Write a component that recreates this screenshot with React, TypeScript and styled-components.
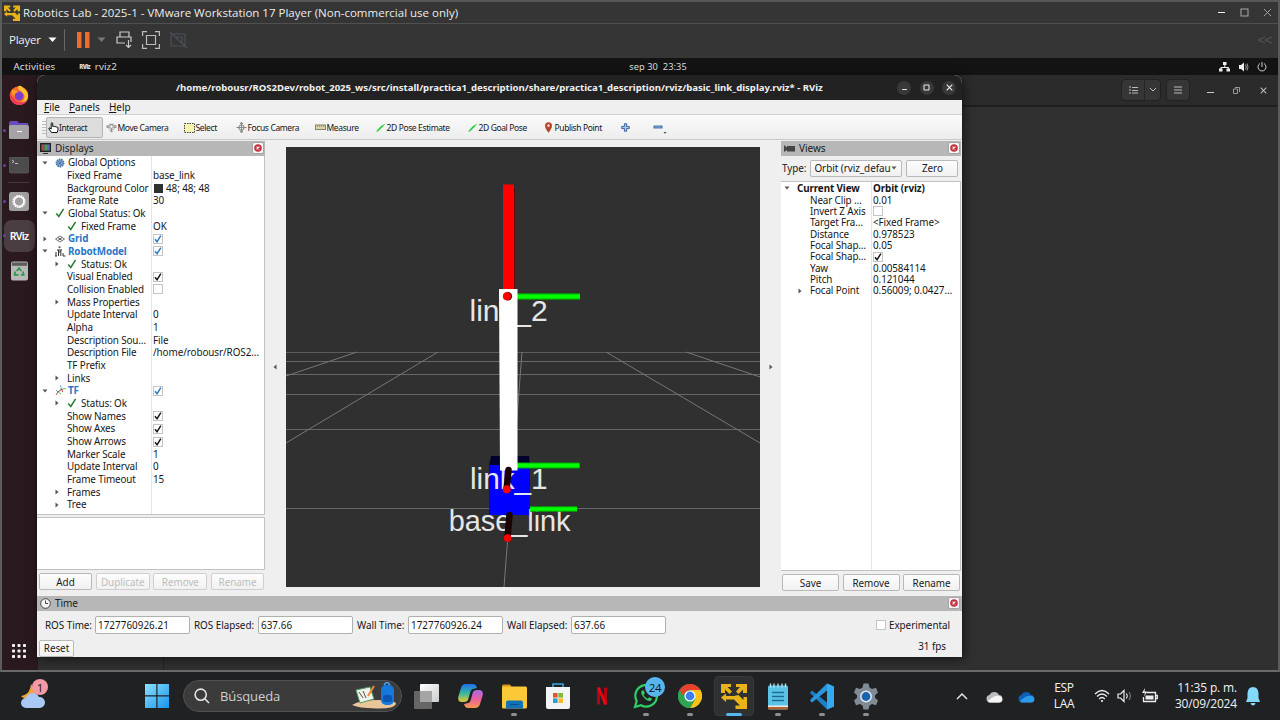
import React from 'react';
import styled, { createGlobalStyle, css } from 'styled-components';

const Global = createGlobalStyle`
  * { box-sizing: border-box; }
  body { margin: 0; width: 1280px; height: 720px; overflow: hidden; background: #202123; }
  svg { display: block; flex: none; }
`;
const ubuntu = css`font-family: 'Noto Sans', 'Open Sans', sans-serif;`;
const segoe = css`font-family: 'Open Sans', 'Noto Sans', sans-serif;`;

const Screen = styled.div`
  width: 1280px; height: 720px; display: flex; flex-direction: column; overflow: hidden; background: #202123;
`;
const VmWindow = styled.div`
  height: 672px; width: 1280px; display: flex; flex-direction: column; background: #353535;
  border-top: 2px solid #565656; border-left: 2px solid #5c5c5c; border-right: 2px solid #5c5c5c; border-bottom: 2px solid #6a6a6a;
`;
const VmTitle = styled.div`
  ${segoe} height: 22px; flex: none; display: flex; align-items: center; padding-left: 2px; gap: 2px;
  border-bottom: 1px solid #505050; color: #ececec; font-size: 11.5px;
`;
const VmTitleText = styled.span`flex: 1; white-space: nowrap; letter-spacing: 0.005px; padding-left: 1px;`;
const VmControls = styled.div`display: flex; gap: 14px; padding-right: 6px; align-items: center;`;
const VmToolbar = styled.div`
  ${segoe} height: 34px; flex: none; display: flex; align-items: center; padding: 0 0 2px 7px; color: #eee; font-size: 11.5px; letter-spacing: -0.25px;
`;
const PlayerLabel = styled.span`padding-bottom: 2px;`;
const Gap = styled.div<{ $w: number }>`width: ${p => p.$w}px; flex: none;`;
const Spacer = styled.div`flex: 1;`;
const VLine = styled.div`width: 1px; height: 22px; background: #666;`;

const TopBar = styled.div`
  ${ubuntu} height: 17px; flex: none; display: grid; grid-template-columns: 1fr auto 1fr; align-items: center;
  background: #131313; color: #dedede; font-size: 9.3px;
`;
const TopLeft = styled.div`display: flex; align-items: center; padding-left: 11.5px; font-size: 9.8px; letter-spacing: 0.1px;`;
const TopCenter = styled.div`padding-left: 36px; white-space: pre; letter-spacing: 0.05px;`;
const TopRight = styled.div`display: flex; justify-content: flex-end; align-items: center; gap: 8px; padding-right: 11px;`;
const RvizMark = styled.b`font-size: 6px; letter-spacing: -0.7px; margin: 0 5px 0 24px; font-weight: 900;`;

const Desktop = styled.div`flex: 1; display: flex; position: relative; min-height: 0;`;
const Dock = styled.div`
  width: 36px; flex: none; background: #2a1a20; display: flex; flex-direction: column; align-items: center; padding-top: 3px;
`;
const DockItem = styled.div<{ $h: number; $dot?: boolean }>`
  width: 100%; height: ${p => p.$h}px; flex: none; display: flex; align-items: center; justify-content: center; position: relative; padding-right: 2px;
  ${p => p.$dot && css`&::before { content: ''; position: absolute; left: 1px; width: 3px; height: 3px; border-radius: 50%; background: #6247a0; }`}
`;
const ActiveTile = styled.div`
  ${ubuntu} width: 31px; height: 32px; border-radius: 8px; background: #4b3e43; color: #fff; font-weight: 600;
  display: flex; align-items: center; justify-content: center; font-size: 10.5px; letter-spacing: -0.7px;
`;
const DockRule = styled.div`width: 22px; height: 1px; background: #46383e; margin-right: 2px;`;

const BackWindow = styled.div`flex: 1; background: #303030; display: flex; flex-direction: column;`;
const BackHeader = styled.div`
  height: 32px; flex: none; background: #2b2b2b; border-bottom: 2px solid #1f1f1f; display: flex; justify-content: flex-end; align-items: center; padding-right: 8px;
`;
const BackBody = styled.div`flex: 1; display: flex;`;
const BackSide = styled.div`width: 126px; border-right: 1px solid #242424;`;
const DarkGroup = styled.div<{ $w: number }>`
  height: 22px; width: ${p => p.$w}px; border: 1px solid #222; border-radius: 4px; background: #363636; display: flex; align-items: center;
  & > * { flex: 1; height: 100%; display: flex; align-items: center; justify-content: center; }
  & > * + * { border-left: 1px solid #262626; flex: 0 0 16px; }
`;

const Rviz = styled.div`
  ${ubuntu} position: absolute; left: 35px; top: 0; width: 925px; height: 582px; background: #efefef; color: #161616;
  display: flex; flex-direction: column; border-radius: 8px 8px 0 0; overflow: hidden; font-size: 9.9px; letter-spacing: -0.04px;
`;
const RvizShadow = styled.div`
  position: absolute; left: 35px; top: 0; width: 925px; height: 582px; box-shadow: 1px 2px 12px rgba(0,0,0,.6); border-radius: 8px 8px 0 0;
`;
const RvizTitle = styled.div`
  height: 25px; flex: none; background: #222; color: #f0f0f0; font-weight: 700; font-size: 9.6px; display: flex; align-items: center;
`;
const RvizTitleText = styled.div`padding-left: 139px; width: 851px; white-space: nowrap; letter-spacing: -0.018px;`;
const RoundBtns = styled.div`display: flex; gap: 8.5px;`;
const Round = styled.div`width: 14px; height: 14px; border-radius: 50%; background: #383838; display: flex; align-items: center; justify-content: center;`;
const MenuBar = styled.div`
  height: 15px; flex: none; border-bottom: 1px solid #d0d0d0; display: flex; align-items: center; gap: 9px; padding-left: 7px; font-size: 10px; letter-spacing: 0;
  & u { text-underline-offset: 1px; }
`;
const ToolBar = styled.div`
  height: 25px; flex: none; display: flex; align-items: center; background: linear-gradient(#fafafa, #ededed); border-bottom: 1px solid #c9c9c9; font-size: 8.5px; letter-spacing: -0.38px; padding: 1px 0 0 5px;
`;
const Grip = styled.div`width: 4px; height: 16px; background: radial-gradient(circle, #bbb 0.7px, transparent 1px) 0 0/2px 3px;`;
const Tool = styled.div<{ $w: number; $on?: boolean; $gap?: number }>`
  width: ${p => p.$w}px; height: 21px; flex: none; display: flex; align-items: center; white-space: nowrap; gap: ${p => p.$gap ?? 1}px; padding-left: ${p => (p.$on ? 1 : 1.5)}px;
  border: 1px solid ${p => (p.$on ? '#b4b4b4' : 'transparent')}; border-radius: 2px; background: ${p => (p.$on ? '#dcdcdc' : 'none')};
`;
const Content = styled.div`height: 456px; flex: none; display: flex; padding-top: 1px;`;
const PanelHead = styled.div<{ $r?: number }>`
  height: 15px; flex: none; background: #b7b7b7; display: flex; align-items: center; padding: 0 ${p => p.$r ?? 1}px 1px 3px; gap: 4px; font-size: 10px; color: #222;
  & > span { flex: 1; }
`;
const CloseBox = styled.div`
  width: 12px; height: 12px; background: #f6f6f6; border: 1px solid #a5a5a5; border-radius: 2px; display: flex; align-items: center; justify-content: center;
`;
const Displays = styled.div`width: 228px; flex: none; display: flex; flex-direction: column;`;
const Tree = styled.div<{ $h: number; $split: number; $up?: boolean }>`
  height: ${p => p.$h}px; flex: none; padding-top: 0.4px; border: 1px solid #c2c2c2; border-left: 0; ${p => p.$up && css`border-top: 0;`}
  background: linear-gradient(90deg, #fff ${p => p.$split}px, #e4e4e4 ${p => p.$split}px, #e4e4e4 ${p => p.$split + 1}px, #fff ${p => p.$split + 1}px);
`;
const Row = styled.div<{ $h: number; $bold?: boolean; $blue?: boolean; $split: number }>`
  height: ${p => p.$h}px; display: grid; grid-template-columns: ${p => p.$split}px 1fr; align-items: center; white-space: nowrap;
  & > :first-child { font-weight: ${p => (p.$bold ? 700 : 400)}; color: ${p => (p.$blue ? '#2a76c6' : 'inherit')}; }
`;
const NameCell = styled.div<{ $pad: number }>`display: flex; align-items: center; padding-left: ${p => p.$pad}px; min-width: 0; line-height: 11px; height: 11.3px; letter-spacing: -0.13px;`;
const Arrow = styled.div`width: 13px; flex: none;`;
const IconCell = styled.div<{ $w: number }>`width: ${p => p.$w}px; flex: none;`;
const ValueCell = styled.div<{ $bold?: boolean }>`padding-left: 2px; display: flex; align-items: center; gap: 3px; line-height: 11px; height: 11.3px; letter-spacing: -0.08px; font-weight: ${p => (p.$bold ? 700 : 400)};`;
const Swatch = styled.div`width: 9px; height: 9px; background: #303030; margin-left: 1px;`;
const Box = styled.div`width: 10px; height: 10px; background: #fff; border: 1px solid #c4c4c4;`;
const Splitter = styled.div<{ $h: number }>`height: ${p => p.$h}px; flex: none;`;
const Describe = styled.div`height: 53px; flex: none; background: #fff; border: 1px solid #c2c2c2; border-left: 0;`;
const Buttons = styled.div<{ $gap: number; $l?: number }>`display: flex; gap: ${p => p.$gap}px; padding: 3px 1px 0 ${p => p.$l ?? 1}px;`;
const Btn = styled.div<{ $w: number; $off?: boolean }>`
  width: ${p => p.$w}px; height: 17px; flex: none; display: flex; align-items: center; justify-content: center; border: 1px solid ${p => (p.$off ? '#cfcfcf' : '#b9b9b9')};
  border-radius: 2px; background: linear-gradient(#fdfdfd, #f1f1f1); color: ${p => (p.$off ? '#bdbdbd' : '#1a1a1a')};
`;
const Collapse = styled.div<{ $l: number }>`width: 21px; flex: none; display: flex; align-items: center; padding: 0 0 4px ${p => p.$l}px;`;
const Viewport = styled.div`width: 474px; height: 440px; margin-top: 6px; flex: none; background: #303030;`;
const Views = styled.div`width: 180px; flex: none; display: flex; flex-direction: column;`;
const TypeRow = styled.div`height: 25px; flex: none; display: flex; align-items: center; padding: 0 0 1px 1px;`;
const Combo = styled.div`
  width: 92px; height: 17px; margin: 0 4px 0 4px; border: 1px solid #b9b9b9; border-radius: 2px; background: linear-gradient(#fdfdfd, #f0f0f0); display: flex; align-items: center; padding: 0 4px 0 3px;
  & > span { flex: 1; overflow: hidden; white-space: nowrap; }
`;
const TimeRow = styled.div`height: 28px; flex: none; display: flex; align-items: center; padding-left: 8px;`;
const Field = styled.div`width: 95px; height: 18px; border: 1px solid #b0b0b0; border-radius: 2px; background: #fff; display: flex; align-items: center; padding-left: 2px; font-size: 9.9px; letter-spacing: 0.03px;`;
const LabelBox = styled.div<{ $w: number; $l?: number }>`width: ${p => p.$w}px; padding-left: ${p => p.$l ?? 4}px; white-space: nowrap; flex: none;`;
const FootRow = styled.div`flex: 1; display: flex; align-items: center; padding: 0 16px 1px 2px; justify-content: space-between;
  & > span { padding-bottom: 4px; }
`;

const Taskbar = styled.div`
  ${segoe} height: 48px; flex: none; display: flex; align-items: center; color: #f2f2f2; background: #202123;
`;
const Slot = styled.div<{ $on?: boolean }>`
  width: 44px; height: 48px; flex: none; display: flex; align-items: center; justify-content: center; position: relative;
  ${p => p.$on && css`&::before { content: ''; position: absolute; inset: 4px 2px; border-radius: 4px; background: #2f3032; border: 1px solid #37383a; }`}
  & > svg { position: relative; }
`;
const Pip = styled.i<{ $on?: boolean }>`
  position: absolute; bottom: 4px; left: 50%; height: 3px; border-radius: 2px; width: ${p => (p.$on ? 16 : 6)}px; margin-left: ${p => (p.$on ? -8 : -3)}px; background: ${p => (p.$on ? '#56b7f1' : '#8f8f8f')};
`;
const Badge = styled.span<{ $c: string; $s: number; $t: number }>`
  position: absolute; left: 21px; top: ${p => p.$t}px; width: ${p => p.$s}px; height: ${p => p.$s}px; border-radius: 50%; background: ${p => p.$c}; color: #111; font-size: 11.5px; display: flex; align-items: center; justify-content: center; letter-spacing: -0.3px;
`;
const Search = styled.div`
  width: 219px; height: 32px; border-radius: 16px; background: #3b3b3c; border: 1px solid #515152; display: flex; align-items: center; padding: 0 4px 0 10px; gap: 10px; font-size: 13px; color: #cfcfcf;
  & > span { flex: 1; letter-spacing: -0.1px; }
`;
const Lang = styled.div`width: 30px; text-align: center; font-size: 12px; line-height: 16px; letter-spacing: -0.3px;`;
const Clock = styled.div`width: 73px; text-align: right; font-size: 12px; line-height: 16px; white-space: nowrap; letter-spacing: -0.16px;`;

const VmLogo = ({ s, c = '#e9b417' }: { s: number; c?: string }) => (
  <svg width={s} height={s} viewBox="0 0 26 26" fill={c}>
    <path d="M0 1h10v3H6.500l4.500 4.500-2.500 2.500L4 6.500V10H0zM15 1h11v9h-4V6.500l-4.500 4.500L15 8.500 19 4h-4zM0 14.500l5-4v2.500h9v3.500H5V19zM13 13l4.500-1 5 5V14H26v12H14.500v-3.500H19l-6-6z" />
  </svg>
);
const Tri = ({ open, c = '#555' }: { open?: boolean; c?: string }) => (
  <svg width="6" height="6" viewBox="0 0 6 6" fill={c}>{open ? <path d="M.5 1.500h5L3 4.500z" /> : <path d="M1.500.5v5L4.500 3z" />}</svg>
);
const Check = ({ c = '#161616', s = 10, w = 1.6 }: { c?: string; s?: number; w?: number }) => (
  <svg width={s} height={s} viewBox="0 0 10 10" fill="none" stroke={c} strokeWidth={w}><path d="M1.200 5.400l2.600 3 4.800-7.600" /></svg>
);
const CheckBox = ({ on, blue }: { on?: boolean; blue?: boolean }) => (
  <Box>{on && <Check s={8} w={1.8} c={blue ? '#2a76c6' : '#161616'} />}</Box>
);
const Close = () => (
  <CloseBox><svg width="8" height="8" viewBox="0 0 8 8"><circle cx="4" cy="4" r="3.800" fill="#c8303f" /><path d="M2.600 2.600l2.800 2.800M5.400 2.600L2.600 5.400" stroke="#fff" strokeWidth="1.100" /></svg></CloseBox>
);
const Xmark = ({ s, c, w = 1 }: { s: number; c: string; w?: number }) => (
  <svg width={s} height={s} viewBox="0 0 10 10" stroke={c} strokeWidth={w}><path d="M1 1l8 8M9 1l-8 8" /></svg>
);

const GearIcon = () => (
  <svg width="10" height="10" viewBox="0 0 10 10"><circle cx="5" cy="5" r="3.600" fill="#8fb0d8" stroke="#3f6ea8" strokeWidth="1.600" strokeDasharray="1.500 .7" /><path d="M5 2v6M2 5h6M3 3l4 4M7 3L3 7" stroke="#3f6ea8" strokeWidth=".6" /></svg>
);
const GridIcon = () => (
  <svg width="10" height="8" viewBox="0 0 10 8" fill="none" stroke="#666" strokeWidth=".9"><path d="M.5 4L5 1l4.500 3L5 7zM2.700 2.500l4.600 3M7.300 2.500l-4.600 3" /><path d="M4 4h2" strokeWidth="2" /></svg>
);
const RobotIcon = () => (
  <svg width="11" height="11" viewBox="0 0 11 11" fill="none" stroke="#333" strokeWidth="1"><circle cx="4.500" cy="1.300" r="1" fill="#555" stroke="none" /><path d="M1 10V6M3.500 4v6M5.800 4v6M2 4h5M8 7v3h2.500M0 10h2M4 6h1.500" /></svg>
);
const TfIcon = () => (
  <svg width="12" height="11" viewBox="0 0 12 11" fill="none" strokeWidth="1"><path d="M6.500 5L5.500 0" stroke="#7aa6d8" /><path d="M3 7L1 10" stroke="#c44" /><path d="M3 7l4-3" stroke="#444" /><path d="M7 4l4-.5" stroke="#6c6" /><path d="M3 7l3 2" stroke="#6c6" /><path d="M7 4l.5 3" stroke="#c44" /><path d="M3 7L1 5" stroke="#88a" /></svg>
);
const icons: Record<string, React.ReactNode> = {
  gear: <GearIcon />, grid: <GridIcon />, robot: <RobotIcon />, tf: <TfIcon />, ok: <Check c="#2a7a33" w={1.5} />,
};

type Item = { n: string; v?: React.ReactNode; lv: number; a?: 'o' | 'c'; i?: string; blue?: boolean; chk?: 0 | 1 };
const displayRows: Item[] = [
  { n: 'Global Options', lv: 0, a: 'o', i: 'gear' },
  { n: 'Fixed Frame', v: 'base_link', lv: 1 },
  { n: 'Background Color', v: <><Swatch />48; 48; 48</>, lv: 1 },
  { n: 'Frame Rate', v: '30', lv: 1 },
  { n: 'Global Status: Ok', lv: 0, a: 'o', i: 'ok' },
  { n: 'Fixed Frame', v: 'OK', lv: 1, i: 'ok' },
  { n: 'Grid', lv: 0, a: 'c', i: 'grid', blue: true, chk: 1 },
  { n: 'RobotModel', lv: 0, a: 'o', i: 'robot', blue: true, chk: 1 },
  { n: 'Status: Ok', lv: 1, a: 'c', i: 'ok' },
  { n: 'Visual Enabled', lv: 1, chk: 1 },
  { n: 'Collision Enabled', lv: 1, chk: 0 },
  { n: 'Mass Properties', lv: 1, a: 'c' },
  { n: 'Update Interval', v: '0', lv: 1 },
  { n: 'Alpha', v: '1', lv: 1 },
  { n: 'Description Sou…', v: 'File', lv: 1 },
  { n: 'Description File', v: '/home/robousr/ROS2…', lv: 1 },
  { n: 'TF Prefix', lv: 1 },
  { n: 'Links', lv: 1, a: 'c' },
  { n: 'TF', lv: 0, a: 'o', i: 'tf', blue: true, chk: 1 },
  { n: 'Status: Ok', lv: 1, a: 'c', i: 'ok' },
  { n: 'Show Names', lv: 1, chk: 1 },
  { n: 'Show Axes', lv: 1, chk: 1 },
  { n: 'Show Arrows', lv: 1, chk: 1 },
  { n: 'Marker Scale', v: '1', lv: 1 },
  { n: 'Update Interval', v: '0', lv: 1 },
  { n: 'Frame Timeout', v: '15', lv: 1 },
  { n: 'Frames', lv: 1, a: 'c' },
  { n: 'Tree', lv: 1, a: 'c' },
];
const viewRows: Item[] = [
  { n: 'Near Clip …', v: '0.01', lv: 1 },
  { n: 'Invert Z Axis', lv: 1, chk: 0 },
  { n: 'Target Fra…', v: '<Fixed Frame>', lv: 1 },
  { n: 'Distance', v: '0.978523', lv: 1 },
  { n: 'Focal Shap…', v: '0.05', lv: 1 },
  { n: 'Focal Shap…', lv: 1, chk: 1 },
  { n: 'Yaw', v: '0.00584114', lv: 1 },
  { n: 'Pitch', v: '0.121044', lv: 1 },
  { n: 'Focal Point', v: '0.56009; 0.0427…', lv: 1, a: 'c' },
];

const DisplayRow = ({ r }: { r: Item }) => (
  <Row $h={12.68} $split={114} $bold={r.blue} $blue={r.blue}>
    <NameCell $pad={r.lv ? 17 : 4.5}>
      <Arrow>{r.a && <Tri open={r.a === 'o'} />}</Arrow>
      {r.lv === 0 ? <IconCell $w={13.5}>{icons[r.i!]}</IconCell> : r.i ? <IconCell $w={14}>{icons[r.i]}</IconCell> : null}
      {r.n}
    </NameCell>
    <ValueCell>{r.chk !== undefined ? <CheckBox on={!!r.chk} blue={r.blue} /> : r.v}</ValueCell>
  </Row>
);

const Scene = () => (
  <svg width="474" height="440" viewBox="286 147 474 440">
    <g stroke="#777" strokeWidth="1" fill="none">
      <path d="M286 352.500H760" stroke="#5c5c5c" />
      <path d="M286 361.500H760M286 374.500H760M286 394.500H760M286 429.500H760M286 508.500H760" stroke="#666" />
      <path d="M438 352L286 443M357 352L286 376M606 352L760 443M686 352L760 377M522 352L504 587" />
    </g>
    <path d="M491 456h38l1 10h-41z" fill="#00002c" />
    <rect x="489" y="465" width="41" height="50" fill="#00f" />
    <g fontFamily="Liberation Sans, Arial, sans-serif" fill="#e6e6e6">
      <text x="469.500" y="320.500" fontSize="30">link_2</text>
      <text x="470" y="488.500" fontSize="29.800">link_1</text>
      <text x="448.800" y="531" fontSize="28.900">base_link</text>
    </g>
    <rect x="503" y="184.500" width="11" height="105" fill="#f00" />
    <path d="M514.500 188v101" stroke="#600" />
    <path d="M516 296.500H580" stroke="#0a0" strokeWidth="6.500" /><path d="M516 296.500H580" stroke="#0f0" strokeWidth="4" />
    <path d="M516 465.500H579.500" stroke="#0a0" strokeWidth="6" /><path d="M516 465.500H579.500" stroke="#0f0" strokeWidth="4" />
    <path d="M530 509H577" stroke="#0a0" strokeWidth="5.500" /><path d="M530 509H577" stroke="#0f0" strokeWidth="3.500" />
    <path d="M499 289h18.500v181.500H500z" fill="#fff" />
    <circle cx="507.800" cy="296.300" r="4.300" fill="#400" /><circle cx="506.900" cy="296.300" r="4" fill="#f00" />
    <path d="M508.500 470L506.800 487" stroke="#1c0000" strokeWidth="6.500" strokeLinecap="round" />
    <circle cx="506.700" cy="489.300" r="4" fill="#f00" />
    <path d="M509.500 515L507.700 535" stroke="#1c0000" strokeWidth="6.500" strokeLinecap="round" />
    <circle cx="507.600" cy="538" r="3.800" fill="#f00" />
  </svg>
);

const Lance = () => <svg width="11" height="10" viewBox="0 0 11 10"><path d="M1 8.500L6 3l4.500-2.500L8 3.500 3 8.500z" fill="#1fd03c" /></svg>;
const Target = () => (
  <svg width="11" height="11" viewBox="0 0 12 12" fill="none" stroke="#8a8a8a" strokeWidth="1.100"><circle cx="6" cy="6" r="2.800" /><path d="M6 .5v11M.5 6h11M4.500 2L6 .5 7.500 2M4.500 10L6 11.500 7.500 10" /></svg>
);
const Pan = () => (
  <svg width="11" height="11" viewBox="0 0 12 12" fill="none" stroke="#8a8a8a" strokeWidth="1"><circle cx="6" cy="5" r="2" /><path d="M3.500 2.500h5M1 4h2v2H1zM9 4h2v2H9zM6 7v4M4.500 9.500L6 11l1.500-1.500M3 7l2 2M9 7L7 9" /></svg>
);

export default function App() {
  return (
    <>
      <Global />
      <Screen>
        <VmWindow>
          <VmTitle>
            <VmLogo s={16} />
            <VmTitleText>Robotics Lab - 2025-1 - VMware Workstation 17 Player (Non-commercial use only)</VmTitleText>
            <VmControls>
              <svg width="9" height="9" viewBox="0 0 9 9"><path d="M1 4.500h7" stroke="#eee" /></svg>
              <svg width="9" height="9" viewBox="0 0 9 9"><rect x="1" y="1" width="7" height="7" fill="none" stroke="#aaa" /></svg>
              <Xmark s={9} c="#aaa" />
            </VmControls>
          </VmTitle>
          <VmToolbar>
            <PlayerLabel>Player</PlayerLabel><Gap $w={7} />
            <svg width="9" height="6" viewBox="0 0 9 6" fill="#fff"><path d="M.5.5h8l-4 4.500z" /></svg>
            <Gap $w={7} /><VLine /><Gap $w={12} />
            <svg width="13" height="16" viewBox="0 0 13 16" fill="#ee6c2c"><path d="M0 0h4.500v16H0zM8 0h4.500v16H8z" /></svg>
            <Gap $w={7} />
            <svg width="9" height="6" viewBox="0 0 9 6" fill="#777"><path d="M.5.5h8l-4 4.500z" /></svg>
            <Gap $w={10} />
            <svg width="17" height="18" viewBox="0 0 17 18" fill="none" stroke="#ccc" strokeWidth="1.200"><path d="M4 6V1h9v5M9 12H1V6h14v5M12.500 9v7M10 14l2.500 2.500L15 14" /></svg>
            <Gap $w={9} />
            <svg width="18" height="18" viewBox="0 0 18 18" fill="none" stroke="#bbb" strokeWidth="1.200"><path d="M.6 5V.6H5M13 .6h4.400V5M17.400 13v4.400H13M5 17.400H.6V13M4.500 4.500h9v9h-9z" /></svg>
            <Gap $w={9} />
            <svg width="19" height="18" viewBox="0 0 19 18" fill="none" stroke="#4b5157" strokeWidth="1.100"><path d="M2 3h14v12H2zM7 6h6v6M1 1l17 16" /></svg>
            <Spacer />
            <svg width="16" height="8" viewBox="0 0 16 8" fill="none" stroke="#4f5a60"><path d="M8 1L1 4l7 3M15 1L8 4l7 3" /></svg>
            <Gap $w={5} />
          </VmToolbar>
          <TopBar>
            <TopLeft>Activities<RvizMark>RViz</RvizMark>rviz2</TopLeft>
            <TopCenter>sep 30  23:35</TopCenter>
            <TopRight>
              <svg width="11" height="10" viewBox="0 0 11 10" fill="#eee"><path d="M4 0h3.500v3H4zM0 6.500h3.500v3H0zM7.500 6.500H11v3H7.500zM5.300 3h1v2h3.500v2h-1V6H2.500v1h-1V5h3.800z" /></svg>
              <svg width="11" height="10" viewBox="0 0 11 10"><path d="M1 3h2l3-2.500v9L3 7H1z" fill="#eee" /><path d="M7.500 2.500q1.500 2.500 0 5M9 1.500q2 3.500 0 7" stroke="#999" fill="none" /></svg>
              <svg width="10" height="10" viewBox="0 0 10 10" fill="none" stroke="#ccc"><path d="M3 1.500a4 4 0 1 0 4 0M5 0v5" /></svg>
            </TopRight>
          </TopBar>
          <Desktop>
            <Dock>
              <DockItem $h={34}>
                <svg width="20" height="20" viewBox="0 0 20 20"><circle cx="10" cy="10.500" r="9.300" fill="#ff6a2b" /><path d="M9 1.500c3-2 4 1 7 3s4 7 2 11-8 5-11 3c6 0 10-5 8-9s-6-3-6-8z" fill="#ffc531" /><path d="M1 11c0 5 4 9 9 9 4 0 7-2 8-5-3 3-9 3-12 0S1 7 1 11z" fill="#f03a5c" /><circle cx="10" cy="11" r="4.400" fill="#7a3fd0" /><path d="M3 4c1 2 5 0 6 4-3-1-4 2-3 4-3-2-4-5-3-8z" fill="#ff9a1f" /></svg>
              </DockItem>
              <DockItem $h={36} $dot>
                <svg width="20" height="18" viewBox="0 0 20 18"><path d="M0 2Q0 0 2 0h6l2 2h9v6H0z" fill="#6a4bbd" /><rect y="4" width="20" height="14" rx="1.500" fill="#a6a3a6" /><path d="M8 10.500h5" stroke="#fff" /></svg>
              </DockItem>
              <DockItem $h={34} $dot>
                <svg width="20" height="17" viewBox="0 0 20 17"><rect width="20" height="16" rx="2" fill="#4c4c4c" stroke="#666" strokeWidth=".6" /><path d="M3 3l2 1.500L3 6M6 6.500h3" stroke="#ddd" fill="none" strokeWidth=".8" /></svg>
              </DockItem>
              <DockRule />
              <DockItem $h={36} $dot>
                <svg width="20" height="19" viewBox="0 0 20 19"><rect width="20" height="19" rx="2.500" fill="#a09e9f" /><circle cx="10" cy="9.500" r="5.400" fill="none" stroke="#fff" strokeWidth="2.400" strokeDasharray="1.600 .6" /><circle cx="10" cy="9.500" r="4.800" fill="none" stroke="#fff" strokeWidth="1.200" /></svg>
              </DockItem>
              <DockItem $h={33} $dot><ActiveTile>RViz</ActiveTile></DockItem>
              <DockItem $h={37}>
                <svg width="17" height="20" viewBox="0 0 18 20"><rect width="18" height="20" rx="2" fill="#b9b9b9" /><rect x="1" y="1" width="16" height="3.500" fill="#5d5d5d" /><path d="M6 10l2.500-3 2.500 3M12.500 10.500l1 3.500h-3M4.500 10.500L3.800 14H8" fill="none" stroke="#2a9a4a" strokeWidth="1.800" /></svg>
              </DockItem>
              <Spacer />
              <DockItem $h={39}>
                <svg width="14" height="14" viewBox="0 0 14 14" fill="#f3f3f3">{[0, 5.5, 11].map(y => [0, 5.5, 11].map(x => <rect key={x + '-' + y} x={x} y={y} width="3" height="3" rx=".8" />))}</svg>
              </DockItem>
            </Dock>
            <BackWindow>
              <BackHeader>
                <DarkGroup $w={40}>
                  <div><svg width="9" height="8" viewBox="0 0 9 8" stroke="#bbb"><path d="M0 1h2M3 1.500h6M0 4h2M3 4.500h6M0 7h2M3 7h6" /></svg></div>
                  <div><svg width="8" height="6" viewBox="0 0 8 6" fill="none" stroke="#bbb"><path d="M1 1l3 3 3-3" /></svg></div>
                </DarkGroup>
                <Gap $w={5} />
                <DarkGroup $w={24}><div><svg width="8" height="8" viewBox="0 0 8 8" stroke="#bbb"><path d="M0 1h8M0 4h8M0 7h8" /></svg></div></DarkGroup>
                <Gap $w={17} />
                <svg width="7" height="7" viewBox="0 0 7 7"><path d="M0 5.500h7" stroke="#ccc" /></svg>
                <Gap $w={19} />
                <svg width="7" height="7" viewBox="0 0 7 7" fill="none" stroke="#999"><path d="M.5 2h4v4.500h-4zM2 .5h4.500V5" /></svg>
                <Gap $w={20} />
                <Xmark s={7} c="#bbb" w={1.5} />
                <Gap $w={3} />
              </BackHeader>
              <BackBody><BackSide /></BackBody>
            </BackWindow>
            <RvizShadow />
            <Rviz>
              <RvizTitle>
                <RvizTitleText>/home/robousr/ROS2Dev/robot_2025_ws/src/install/practica1_description/share/practica1_description/rviz/basic_link_display.rviz* - RViz</RvizTitleText>
                <Gap $w={9} />
                <RoundBtns>
                  <Round><svg width="7" height="7" viewBox="0 0 7 7"><path d="M1 5.500h5" stroke="#ddd" /></svg></Round>
                  <Round><svg width="7" height="7" viewBox="0 0 7 7"><path d="M1 1h5v5H1z" fill="none" stroke="#eee" /></svg></Round>
                  <Round><Xmark s={7} c="#eee" w={1.6} /></Round>
                </RoundBtns>
              </RvizTitle>
              <MenuBar><span><u>F</u>ile</span><span><u>P</u>anels</span><span><u>H</u>elp</span></MenuBar>
              <ToolBar>
                <Grip />
                <Tool $w={57} $on $gap={-1}>
                  <svg width="11" height="11" viewBox="0 0 11 11" fill="#fff" stroke="#111" strokeWidth="1"><path d="M3.500 10.500L1 7q-.5-1.500 1-1l1.200 1V1.200q.8-1 1.500 0V4.500q1.500-.6 2 .2 1.500-.4 1.800.4 1.500-.2 1.500.8V8l-.8 2.500z" /></svg>Interact
                </Tool>
                <Tool $w={78}><Pan />Move Camera</Tool>
                <Tool $w={52}><svg width="11" height="10" viewBox="0 0 11 10"><rect x=".5" y=".5" width="10" height="9" fill="#f7f3b0" stroke="#444" strokeDasharray="1.500 1" /></svg>Select</Tool>
                <Tool $w={79}><Target />Focus Camera</Tool>
                <Tool $w={60}><svg width="11" height="7" viewBox="0 0 11 7"><rect x=".5" y="1" width="10" height="4.500" fill="#d8d2ae" stroke="#8a8564" /><path d="M2.500 1v2M4.500 1v2M6.500 1v2M8.500 1v2" stroke="#8a8564" strokeWidth=".7" /></svg>Measure</Tool>
                <Tool $w={92}><Lance />2D Pose Estimate</Tool>
                <Tool $w={77}><Lance />2D Goal Pose</Tool>
                <Tool $w={77} $gap={2}><svg width="9" height="11" viewBox="0 0 9 11"><path d="M4.500 10.800Q1 6.500 1 3.800a3.500 3.500 0 0 1 7 0Q8 6.500 4.500 10.800z" fill="#b8452b" /><circle cx="4.500" cy="3.600" r="1.300" fill="#f3d6cf" /></svg>Publish Point</Tool>
                <Tool $w={32}><svg width="9" height="9" viewBox="0 0 10 10"><path d="M3.800.8h2.400v3h3v2.400h-3v3H3.800v-3h-3V3.800h3z" fill="#a9c6ea" stroke="#2d5c9e" /></svg></Tool>
                <Tool $w={24}><svg width="14" height="13" viewBox="0 0 14 13"><rect x="1" y="5" width="8" height="2" fill="#8bb0de" stroke="#2d5c9e" strokeWidth=".8" /><path d="M10.500 11h3L12 12.800z" fill="#444" /></svg></Tool>
              </ToolBar>
              <Content>
                <Displays>
                  <PanelHead>
                    <svg width="11" height="11" viewBox="0 0 11 11"><rect x=".5" y=".5" width="10" height="8" fill="#333" stroke="#222" /><path d="M1.500 1.500h3v6h-3z" fill="#a54b58" /><path d="M4.500 1.500H7v6H4.500z" fill="#4c9a63" /><path d="M7 1.500h2.500v6H7z" fill="#5b6fb5" /><path d="M3 10.500h5" stroke="#333" /></svg>
                    <span>Displays</span><Close />
                  </PanelHead>
                  <Tree $h={359} $split={114} $up>
                    {displayRows.map((r, i) => <DisplayRow key={i} r={r} />)}
                  </Tree>
                  <Splitter $h={2} />
                  <Describe />
                  <Buttons $gap={3.7} $l={2}>
                    <Btn $w={53}>Add</Btn><Btn $w={54} $off>Duplicate</Btn><Btn $w={54} $off>Remove</Btn><Btn $w={53} $off>Rename</Btn>
                  </Buttons>
                </Displays>
                <Collapse $l={7}><svg width="6" height="6" viewBox="0 0 6 6" fill="#555"><path d="M4.500.5v5L1.500 3z" /></svg></Collapse>
                <Viewport><Scene /></Viewport>
                <Collapse $l={8}><Tri /></Collapse>
                <Views>
                  <PanelHead>
                    <svg width="11" height="9" viewBox="0 0 11 9" fill="#444"><path d="M0 1l3 2.500V2h8v5.500H3V6L0 8z" /></svg>
                    <span>Views</span><Close />
                  </PanelHead>
                  <TypeRow>Type:<Combo><span>Orbit (rviz_default)</span><Tri open /></Combo><Btn $w={52}>Zero</Btn></TypeRow>
                  <Tree $h={390} $split={90}>
                    <Row $h={12} $split={90} $bold>
                      <NameCell $pad={3}><Arrow>{<Tri open />}</Arrow>Current View</NameCell>
                      <ValueCell $bold>Orbit (rviz)</ValueCell>
                    </Row>
                    {viewRows.map((r, i) => (
                      <Row key={i} $h={11.35} $split={90}>
                        <NameCell $pad={16}><Arrow>{r.a && <Tri />}</Arrow>{r.n}</NameCell>
                        <ValueCell>{r.chk !== undefined ? <CheckBox on={!!r.chk} /> : r.v}</ValueCell>
                      </Row>
                    ))}
                  </Tree>
                  <Buttons $gap={3.5}><Btn $w={57}>Save</Btn><Btn $w={57}>Remove</Btn><Btn $w={57}>Rename</Btn></Buttons>
                </Views>
              </Content>
              <PanelHead $r={2}>
                <svg width="11" height="11" viewBox="0 0 11 11" fill="#f4f4f4" stroke="#444"><circle cx="5.500" cy="5.500" r="4.800" /><path d="M5.500 2.500v3H8" fill="none" /></svg>
                <span>Time</span><Close />
              </PanelHead>
              <TimeRow>
                <LabelBox $w={50} $l={0}>ROS Time:</LabelBox><Field>1727760926.21</Field>
                <LabelBox $w={68}>ROS Elapsed:</LabelBox><Field>637.66</Field>
                <LabelBox $w={55}>Wall Time:</LabelBox><Field>1727760926.24</Field>
                <LabelBox $w={68}>Wall Elapsed:</LabelBox><Field>637.66</Field>
                <Spacer /><Box /><Gap $w={3} /><span>Experimental</span><Gap $w={12} />
              </TimeRow>
              <FootRow><Btn $w={35}>Reset</Btn><span>31 fps</span></FootRow>
            </Rviz>
          </Desktop>
        </VmWindow>
        <Taskbar>
          <Gap $w={11} />
          <Slot>
            <svg width="30" height="30" viewBox="0 0 30 30"><path d="M13 3c-1 8-4 11-10 12 4 5 14 3 15-4z" fill="#f0a437" /><path d="M8 27a5 5 0 0 1 0-10 7 7 0 0 1 13-1 5.500 5.500 0 0 1 1 11z" fill="#a9c8f4" /></svg>
            <Badge $c="#f59aa5" $s={16} $t={7}>1</Badge>
          </Slot>
          <Gap $w={80} />
          <Slot>
            <svg width="24" height="24" viewBox="0 0 24 24"><defs><linearGradient id="win" x2="1" y2="1"><stop stopColor="#8be2fb" /><stop offset="1" stopColor="#1793f0" /></linearGradient></defs><path d="M0 0h11.300v11.300H0zM12.500 0H24v11.300H12.500zM0 12.500h11.300V24H0zM12.500 12.500H24V24H12.500z" fill="url(#win)" /></svg>
          </Slot>
          <Gap $w={4} />
          <Search>
            <svg width="16" height="16" viewBox="0 0 16 16" fill="none" stroke="#e4e4e4" strokeWidth="1.600"><circle cx="6.700" cy="6.700" r="5.600" /><path d="M10.800 10.800L15 15" /></svg>
            <span>Búsqueda</span>
            <svg width="46" height="28" viewBox="0 0 46 28"><path d="M1 23q8-5 26-5t18 4q-2 5-20 4.500T1 23z" fill="#e9c69a" /><path d="M5 8l14-3 4 12-14 4z" fill="#eef2ea" stroke="#4f9a62" /><path d="M8 10l4 6M12 9l3 7" stroke="#555" /><path d="M17 14l6-10" stroke="#f08a35" strokeWidth="2" /><rect x="30" y="3" width="13" height="20" rx="5" fill="#1677dd" /><path d="M33 3q3-5 6 0" stroke="#4aa5f5" fill="none" strokeWidth="1.500" /><rect x="32" y="13" width="9" height="7" rx="2" fill="#0d55b3" /></svg>
          </Search>
          <Gap $w={2} />
          <Slot><svg width="25" height="25" viewBox="0 0 25 25"><defs><linearGradient id="tv" x2="1" y2="1"><stop stopColor="#fff" /><stop offset="1" stopColor="#ccc" /></linearGradient></defs><rect y="7" width="18" height="18" rx="1" fill="#666" /><rect x="6" width="19" height="18" rx="1" fill="url(#tv)" /><rect x="6" y="7" width="12" height="11" fill="#a5a5a5" /></svg></Slot>
          <Slot><svg width="25" height="24" viewBox="0 0 25 24"><defs><linearGradient id="cpa" x2="0" y2="1"><stop stopColor="#1d6ff0" /><stop offset=".5" stopColor="#37b6a0" /><stop offset="1" stopColor="#e6c835" /></linearGradient><linearGradient id="cpb" x2="0" y2="1"><stop stopColor="#a56be8" /><stop offset=".5" stopColor="#ec5f9c" /><stop offset="1" stopColor="#f79a4b" /></linearGradient></defs><path d="M8 0h7q3 0 4 4l-4 1q-2 0-3 4l-2 7q-1 2-4 2H4q-5 0-3.500-6L3 4q1-4 5-4z" fill="url(#cpa)" /><path d="M17 24h-7q-3 0-4-4l4-1q2 0 3-4l2-7q1-2 4-2h2q5 0 3.500 6L22 20q-1 4-5 4z" fill="url(#cpb)" /></svg></Slot>
          <Slot><svg width="25" height="25" viewBox="0 0 25 24"><path d="M0 1.500Q0 0 1.500 0H8l2 3H0z" fill="#d8941c" /><rect y="2" width="25" height="22" rx="1.500" fill="#fbc938" /><path d="M4 24v-6q0-2 2-2h13q2 0 2 2v6z" fill="#1272b8" /><path d="M8 20h9" stroke="#0a4f8a" /></svg><Pip /></Slot>
          <Slot><svg width="24" height="26" viewBox="0 0 24 26"><path d="M7 5V1h10v4" fill="none" stroke="#3aa5dd" strokeWidth="1.600" /><path d="M0 4h24v20q0 2-2 2H2q-2 0-2-2z" fill="#f3f4f5" /><path d="M7 10h4.600v4.600H7z" fill="#e8512e" /><path d="M12.400 10H17v4.600h-4.600z" fill="#7fb83a" /><path d="M7 15.400h4.600V20H7z" fill="#2a9fe0" /><path d="M12.400 15.400H17V20h-4.600z" fill="#f7b928" /></svg></Slot>
          <Slot><svg width="10" height="18" viewBox="0 0 10 17"><path d="M0 0h3v17H0zM7 0h3v17H7z" fill="#b1060f" /><path d="M0 0h3l7 17H7z" fill="#e50914" /></svg></Slot>
          <Slot>
            <svg width="26" height="26" viewBox="0 0 26 26" fill="none" stroke="#2fcf66" strokeWidth="2.200"><path d="M2 24l1.700-6A10.800 10.800 0 1 1 8 22.300z" /><path d="M9 7.500q-2 2 1 6t6.500 4.500q2 0 2.500-2.300l-2.800-1.500-1.500 1.600q-3-1-4.200-4l1.300-1.300-1-3z" fill="#2fcf66" stroke="none" /></svg>
            <Badge $c="#57b6ee" $s={20} $t={5}>24</Badge><Pip />
          </Slot>
          <Slot><svg width="24" height="24" viewBox="0 0 24 24"><circle cx="12" cy="12" r="12" fill="#31a452" /><path d="M22.400 6A12 12 0 0 1 12 24l5.200-9L12 6z" fill="#fbc116" /><path d="M1.600 6A12 12 0 0 1 22.400 6H12a6 6 0 0 0-5.200 9z" fill="#e8412f" /><path d="M1.600 6A12 12 0 0 0 12 24l5.200-9a6 6 0 0 1-10.400 0z" fill="#31a452" /><circle cx="12" cy="12" r="5.600" fill="#fff" /><circle cx="12" cy="12" r="4.400" fill="#3c7df0" /></svg><Pip /></Slot>
          <Slot $on><VmLogo s={26} /><Pip $on /></Slot>
          <Slot><svg width="20" height="27" viewBox="0 0 20 26"><rect y="2" width="20" height="24" rx="1.500" fill="#5bc3e6" /><path d="M0 23h20v1.500q0 1.500-1.500 1.500h-17Q0 26 0 24.500z" fill="#b4622d" /><path d="M0 22h20v1.500H0z" fill="#e9eef0" /><path d="M2.500 0v4M6 0v4M10 0v4M14 0v4M17.500 0v4" stroke="#bfe6f5" strokeWidth="1.300" /><path d="M4 9h12M4 13h12M4 17h12" stroke="#1b6c94" strokeWidth="1.500" /></svg><Pip /></Slot>
          <Slot><svg width="24" height="27" viewBox="0 0 24 26"><path d="M17 0l7 3v20l-7 3L1 10.500 0 9l2-2 15 12z" fill="#1b7fc4" /><path d="M17 0v7L2 19l-2-2 1-1.500z" fill="#2a97dd" /><path d="M17 0l7 3v20l-7 3z" fill="#35a9ee" /></svg><Pip /></Slot>
          <Slot><svg width="24" height="27" viewBox="0 0 24 26"><path d="M9.500 0h5l1 4 2.500 1.500 4-1.200L24 9l-3 2.700v2.600L24 17l-2 4.700-4-1.200L15.500 22l-1 4h-5l-1-4L6 20.500l-4 1.200L0 17l3-2.700v-2.600L0 9l2-4.700 4 1.200L8.500 4z" fill="#818b95" /><circle cx="12" cy="13" r="5.200" fill="#1763b0" stroke="#dde5ec" strokeWidth="1.600" /></svg><Pip /></Slot>
          <Gap $w={68} />
          <svg width="12" height="8" viewBox="0 0 12 8" fill="none" stroke="#eee" strokeWidth="1.400"><path d="M1 7l5-5 5 5" /></svg>
          <Gap $w={18} />
          <svg width="17" height="13" viewBox="0 0 17 13"><path d="M4 12.500a3.800 3.800 0 0 1-.5-7.500A5.200 5.200 0 0 1 13 5a3.800 3.800 0 0 1 .5 7.500z" fill="#bdbdbd" /><path d="M2 11q6-6 12-5 3 2 2 5-1 1.500-3 1.500H4q-1.500 0-2-1.500z" fill="#f5f5f5" /></svg>
          <Gap $w={15} />
          <svg width="17" height="13" viewBox="0 0 17 13"><path d="M4 12.500a3.800 3.800 0 0 1-.5-7.500A5.200 5.200 0 0 1 13 5a3.800 3.800 0 0 1 .5 7.500z" fill="#0d5fb8" /><path d="M2 11q6-6 12-5 3 2 2 5-1 1.500-3 1.500H4q-1.500 0-2-1.500z" fill="#2f9be8" /></svg>
          <Gap $w={14} />
          <Lang>ESP<br />LAA</Lang>
          <Gap $w={15} />
          <svg width="16" height="14" viewBox="0 0 16 14" fill="none" stroke="#eee" strokeWidth="1.300"><path d="M1 5q7-7 14 0M3 7.500q5-5 10 0M5.200 10q2.800-3 5.600 0" /><circle cx="8" cy="12" r="1.100" fill="#eee" stroke="none" /></svg>
          <Gap $w={7} />
          <svg width="16" height="14" viewBox="0 0 16 14" fill="none" stroke="#eee" strokeWidth="1.200"><path d="M1 5h2.500L7 1.500v11L3.500 9H1z" /><path d="M9.500 4.500q1.500 2.500 0 5" /><path d="M12 3q2.800 4 0 8" stroke="#777" /></svg>
          <Gap $w={8} />
          <svg width="17" height="16" viewBox="0 0 17 16" fill="none" stroke="#eee" strokeWidth="1.300"><path d="M6 4.500h8.500v9h-12V9" /><path d="M4.500 7.500h8v4h-8z" fill="#eee" stroke="none" /><path d="M15 7.500h1.300v3H15" /><path d="M4 0L1 5h3L3 8.500l3.500-5h-3z" fill="#eee" stroke="none" /></svg>
          <Gap $w={6} />
          <Clock>11:35 p. m.<br />30/09/2024</Clock>
          <Gap $w={9} />
          <svg width="14" height="19" viewBox="0 0 14 19" fill="#84d8f8"><path d="M7 0q5 0 5.500 6v5l1.500 4H0l1.500-4V6Q2 0 7 0zM4.500 16h5Q9 18.500 7 18.500T4.500 16z" /></svg>
        </Taskbar>
      </Screen>
    </>
  );
}
